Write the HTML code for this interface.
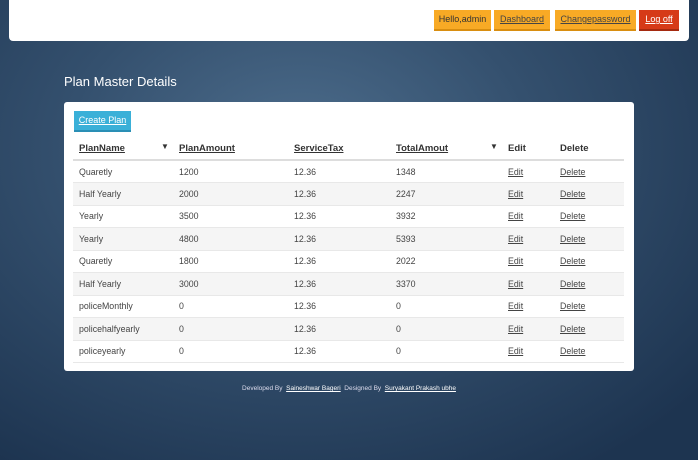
<!DOCTYPE html>
<html><head><style>
*{margin:0;padding:0;box-sizing:border-box}
body{width:698px;height:460px;overflow:hidden;font-family:"Liberation Sans",sans-serif;background:radial-gradient(ellipse 520px 380px at 300px 150px,#4d6d8c 0%,#34506e 45%,#1d3450 100%);position:relative}
.top{position:absolute;left:9px;top:0;width:680px;height:41px;background:#fff;border-radius:0 0 4px 4px}
.b{position:absolute;top:10px;height:21px;background:#f8aa25;border-bottom:2px solid #d98e10;font-size:9px;color:#333;text-align:center;line-height:19px}
.b u{color:#444}
h1{position:absolute;left:64px;top:74px;font-size:13px;color:#fff;font-weight:normal}
.panel{position:absolute;left:64px;top:102px;width:570px;height:269px;background:#fff;border-radius:3px}
.cp{position:absolute;left:10px;top:9px;width:57px;height:21px;background:#3ab0d8;border-bottom:2px solid #2a8fb5;color:#fff;font-size:9px;text-align:center;line-height:19px;text-decoration:underline}
table{position:absolute;left:9px;top:36px;width:551px;border-collapse:collapse;font-size:8.8px;color:#444}
th{text-align:left;font-size:9.5px;color:#333;height:22px;border-bottom:2px solid #ddd;font-weight:bold;position:relative}
td{height:22.5px;border-bottom:1px solid #e8e8e8}
tr:nth-child(odd) td{background:#f5f5f5}
td:first-child,th:first-child{padding-left:6px}
.f{position:absolute;font-size:8px;top:4px}
.foot{position:absolute;top:385px;left:0;width:698px;text-align:center;font-size:6.5px;color:#dde}
.foot u{color:#fff}
</style></head><body>
<div class="top">
<div class="b" style="left:425px;width:57px">Hello,admin</div>
<div class="b" style="left:485px;width:56px"><u>Dashboard</u></div>
<div class="b" style="left:546px;width:81px"><u>Changepassword</u></div>
<div class="b" style="left:630px;width:40px;background:#d63a18;border-bottom-color:#a52a10;color:#fff"><u style="color:#fff">Log off</u></div>
</div>
<h1>Plan Master Details</h1>
<div class="panel">
<div class="cp">Create Plan</div>
<table>
<colgroup><col style="width:106px"><col style="width:115px"><col style="width:102px"><col style="width:112px"><col style="width:52px"><col></colgroup>
<tr><th><u>PlanName</u><span class="f" style="left:88px">▼</span></th><th><u>PlanAmount</u></th><th><u>ServiceTax</u></th><th><u>TotalAmout</u><span class="f" style="left:94px">▼</span></th><th>Edit</th><th>Delete</th></tr>
<tr><td>Quaretly</td><td>1200</td><td>12.36</td><td>1348</td><td><u>Edit</u></td><td><u>Delete</u></td></tr>
<tr><td>Half Yearly</td><td>2000</td><td>12.36</td><td>2247</td><td><u>Edit</u></td><td><u>Delete</u></td></tr>
<tr><td>Yearly</td><td>3500</td><td>12.36</td><td>3932</td><td><u>Edit</u></td><td><u>Delete</u></td></tr>
<tr><td>Yearly</td><td>4800</td><td>12.36</td><td>5393</td><td><u>Edit</u></td><td><u>Delete</u></td></tr>
<tr><td>Quaretly</td><td>1800</td><td>12.36</td><td>2022</td><td><u>Edit</u></td><td><u>Delete</u></td></tr>
<tr><td>Half Yearly</td><td>3000</td><td>12.36</td><td>3370</td><td><u>Edit</u></td><td><u>Delete</u></td></tr>
<tr><td>policeMonthly</td><td>0</td><td>12.36</td><td>0</td><td><u>Edit</u></td><td><u>Delete</u></td></tr>
<tr><td>policehalfyearly</td><td>0</td><td>12.36</td><td>0</td><td><u>Edit</u></td><td><u>Delete</u></td></tr>
<tr><td>policeyearly</td><td>0</td><td>12.36</td><td>0</td><td><u>Edit</u></td><td><u>Delete</u></td></tr>
</table>
</div>
<div class="foot">Developed By &nbsp;<u>Saineshwar Bageri</u> &nbsp;Designed By &nbsp;<u>Suryakant Prakash ubhe</u></div>
</body></html>
